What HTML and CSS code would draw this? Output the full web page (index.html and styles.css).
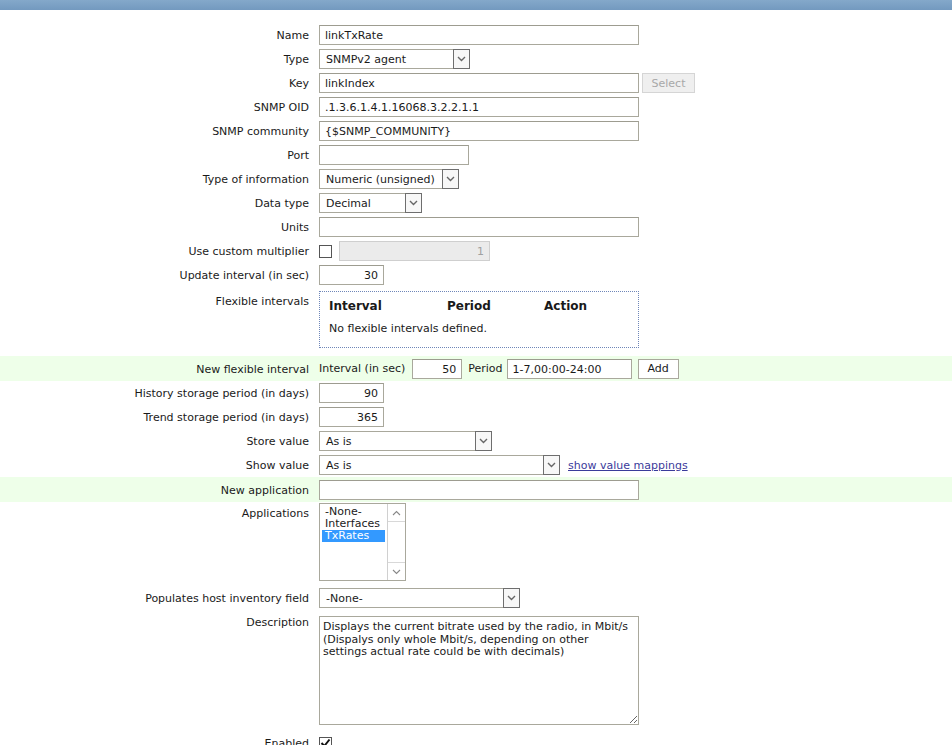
FILE: index.html
```html
<!DOCTYPE html>
<html>
<head>
<meta charset="utf-8">
<link rel="stylesheet" href="styles.css">
</head>
<body>
<div class="topbar"></div>
<form class="form">
  <div class="row"><div class="lbl">Name</div><div class="fld"><input class="inp w320" type="text" value="linkTxRate"></div></div>
  <div class="row"><div class="lbl">Type</div><div class="fld"><div class="select w151"><span class="stext">SNMPv2 agent</span><span class="arrow"><svg width="9" height="6" viewBox="0 0 9 6"><path d="M1 1l3.5 3.5L8 1" stroke="#666" stroke-width="1.4" fill="none"/></svg></span></div></div></div>
  <div class="row"><div class="lbl">Key</div><div class="fld"><input class="inp w320" type="text" value="linkIndex"><button type="button" class="btn-dis">Select</button></div></div>
  <div class="row"><div class="lbl">SNMP OID</div><div class="fld"><input class="inp w320" type="text" value=".1.3.6.1.4.1.16068.3.2.2.1.1"></div></div>
  <div class="row"><div class="lbl">SNMP community</div><div class="fld"><input class="inp w320" type="text" value="{$SNMP_COMMUNITY}"></div></div>
  <div class="row"><div class="lbl">Port</div><div class="fld"><input class="inp w150" type="text" value=""></div></div>
  <div class="row"><div class="lbl">Type of information</div><div class="fld"><div class="select w140"><span class="stext">Numeric (unsigned)</span><span class="arrow"><svg width="9" height="6" viewBox="0 0 9 6"><path d="M1 1l3.5 3.5L8 1" stroke="#666" stroke-width="1.4" fill="none"/></svg></span></div></div></div>
  <div class="row"><div class="lbl">Data type</div><div class="fld"><div class="select w103"><span class="stext">Decimal</span><span class="arrow"><svg width="9" height="6" viewBox="0 0 9 6"><path d="M1 1l3.5 3.5L8 1" stroke="#666" stroke-width="1.4" fill="none"/></svg></span></div></div></div>
  <div class="row"><div class="lbl">Units</div><div class="fld"><input class="inp w320" type="text" value=""></div></div>
  <div class="row"><div class="lbl">Use custom multiplier</div><div class="fld"><span class="chk"></span><input class="inp inp-dis w151 num" type="text" value="1" disabled></div></div>
  <div class="row"><div class="lbl">Update interval (in sec)</div><div class="fld"><input class="inp w65 num" type="text" value="30"></div></div>
  <div class="row row-top flex-row"><div class="lbl">Flexible intervals</div><div class="fld">
    <div class="flexbox">
      <div class="flexhead"><span class="h1">Interval</span><span class="h2">Period</span><span class="h3">Action</span></div>
      <div class="flexempty">No flexible intervals defined.</div>
    </div>
  </div></div>
  <div class="row green"><div class="lbl">New flexible interval</div><div class="fld"><span class="txt">Interval (in sec)</span><input class="inp w50 num" type="text" value="50"><span class="txt">Period</span><input class="inp w125" type="text" value="1-7,00:00-24:00"><button type="button" class="btn">Add</button></div></div>
  <div class="row"><div class="lbl">History storage period (in days)</div><div class="fld"><input class="inp w65 num" type="text" value="90"></div></div>
  <div class="row"><div class="lbl">Trend storage period (in days)</div><div class="fld"><input class="inp w65 num" type="text" value="365"></div></div>
  <div class="row"><div class="lbl">Store value</div><div class="fld"><div class="select w173"><span class="stext">As is</span><span class="arrow"><svg width="9" height="6" viewBox="0 0 9 6"><path d="M1 1l3.5 3.5L8 1" stroke="#666" stroke-width="1.4" fill="none"/></svg></span></div></div></div>
  <div class="row"><div class="lbl">Show value</div><div class="fld"><div class="select w241"><span class="stext">As is</span><span class="arrow"><svg width="9" height="6" viewBox="0 0 9 6"><path d="M1 1l3.5 3.5L8 1" stroke="#666" stroke-width="1.4" fill="none"/></svg></span></div><a class="link" href="#">show value mappings</a></div></div>
  <div class="row green"><div class="lbl">New application</div><div class="fld"><input class="inp w320" type="text" value=""></div></div>
  <div class="row row-top app-row"><div class="lbl">Applications</div><div class="fld">
    <div class="listbox">
      <div class="items"><div class="item">-None-</div><div class="item">Interfaces</div><div class="item sel">TxRates</div></div>
      <div class="scroll">
        <span class="sbtn"><svg width="9" height="6" viewBox="0 0 9 6"><path d="M1 5l3.5-3.5L8 5" stroke="#888" stroke-width="1.1" fill="none"/></svg></span>
        <span class="strack"></span>
        <span class="sbtn"><svg width="9" height="6" viewBox="0 0 9 6"><path d="M1 1l3.5 3.5L8 1" stroke="#888" stroke-width="1.1" fill="none"/></svg></span>
      </div>
    </div>
  </div></div>
  <div class="row"><div class="lbl">Populates host inventory field</div><div class="fld"><div class="select w201"><span class="stext">-None-</span><span class="arrow"><svg width="9" height="6" viewBox="0 0 9 6"><path d="M1 1l3.5 3.5L8 1" stroke="#666" stroke-width="1.4" fill="none"/></svg></span></div></div></div>
  <div class="row row-top desc-row"><div class="lbl">Description</div><div class="fld"><textarea class="area">Displays the current bitrate used by the radio, in Mbit/s
(Dispalys only whole Mbit/s, depending on other settings actual rate could be with decimals)</textarea></div></div>
  <div class="row"><div class="lbl">Enabled</div><div class="fld"><span class="chk checked"><svg width="11" height="10" viewBox="0 0 11 10"><path d="M1.5 5l2.8 3L9.5 1.5" stroke="#111" stroke-width="2" fill="none"/></svg></span></div></div>
</form>
</body>
</html>
```
FILE: styles.css
```css
html, body {
  margin: 0;
  padding: 0;
  background: #ffffff;
}
body {
  font-family: "DejaVu Sans", "Liberation Sans", sans-serif;
  font-size: 11px;
  color: #1a1a1a;
  overflow: hidden;
}
.topbar {
  height: 10px;
  background: linear-gradient(#84a8ca, #7399bf);
}
.form {
  padding-top: 13px;
}
.row {
  display: grid;
  grid-template-columns: 309px 1fr;
  column-gap: 10px;
  align-items: center;
  height: 24px;
}
.row-top {
  align-items: start;
  height: auto;
}
.green {
  background: #eeffe9;
  height: 25px;
}
.lbl {
  text-align: right;
  white-space: nowrap;
  padding-top: 1px;
}
.fld {
  display: flex;
  align-items: center;
}
.inp {
  box-sizing: border-box;
  height: 20px;
  border: 1px solid #a9a89c;
  border-top-color: #9d9c90;
  padding: 1px 5px 0;
  font: inherit;
  color: #1a1a1a;
  background: #fff;
  margin: 0;
  outline: none;
}
.num { text-align: right; }
.w320 { width: 320px; }
.w151 { width: 151px; }
.w150 { width: 150px; }
.w140 { width: 140px; }
.w103 { width: 103px; }
.w65 { width: 65px; }
.w50 { width: 50px; }
.w125 { width: 125px; }
.w173 { width: 173px; }
.w241 { width: 241px; }
.w201 { width: 201px; }
.select {
  box-sizing: border-box;
  height: 20px;
  border: 1px solid #a9a89c;
  display: flex;
  align-items: center;
  background: #fff;
}
.stext {
  flex: 1;
  padding-left: 6px;
  white-space: nowrap;
  overflow: hidden;
}
.arrow {
  box-sizing: border-box;
  width: 17px;
  height: 20px;
  margin: -1px -1px -1px 0;
  border: 1px solid #6e6e6e;
  background: #f7f7f7;
  display: flex;
  align-items: center;
  justify-content: center;
}
.btn-dis {
  box-sizing: border-box;
  margin-left: 3px;
  height: 20px;
  width: 53px;
  border: 1px solid #d5d5d5;
  background: #efefef;
  color: #a8a8a8;
  font: inherit;
  padding: 0;
}
.btn {
  box-sizing: border-box;
  margin-left: 6px;
  height: 20px;
  width: 41px;
  border: 1px solid #a9a89c;
  background: #fff;
  color: #1a1a1a;
  font: inherit;
  padding: 0;
}
.chk {
  box-sizing: border-box;
  width: 13px;
  height: 13px;
  border: 1px solid #555;
  background: #fff;
  display: inline-flex;
  align-items: center;
  justify-content: center;
}
.inp-dis {
  margin-left: 7px;
  background: #ebebeb;
  border-color: #cfcfcf;
  color: #a0a0a0;
}
.flex-row {
  padding: 4px 0 8px;
}
.flex-row .lbl {
  padding-top: 4px;
}
.flexbox {
  box-sizing: border-box;
  width: 320px;
  height: 57px;
  border: 1px dotted #6f86b8;
  padding: 7px 9px 6px;
}
.flexhead {
  display: flex;
  font-weight: bold;
  font-size: 12px;
}
.h1 { width: 118px; }
.h2 { width: 97px; }
.flexempty {
  margin-top: 9px;
}
.txt {
  margin-right: 7px;
}
.fld .inp + .txt {
  margin-left: 6px;
  margin-right: 4px;
}
.link {
  margin-left: 8px;
  color: #3b3b9b;
  text-decoration: underline;
}
.app-row {
  padding: 0 0 5px;
}
.app-row .lbl {
  padding-top: 5px;
}
.listbox {
  box-sizing: border-box;
  width: 87px;
  height: 78px;
  margin-top: 1px;
  border: 1px solid #a9a89c;
  display: flex;
  background: #fff;
}
.items {
  flex: 1;
  padding: 2px 2px;
  font-size: 11px;
  line-height: 12px;
}
.item {
  padding-left: 3px;
}
.item.sel {
  background: #3399ff;
  color: #fff;
}
.scroll {
  width: 17px;
  border-left: 1px solid #d0d0d0;
  display: flex;
  flex-direction: column;
}
.sbtn {
  height: 17px;
  display: flex;
  align-items: center;
  justify-content: center;
  border-top: 1px solid #d8d8d8;
}
.sbtn:first-child {
  border-top: none;
  border-bottom: 1px solid #d8d8d8;
}
.strack {
  flex: 1;
}
.desc-row {
  padding: 6px 0 6px;
}
.desc-row .lbl {
  padding-top: 0;
}
.area {
  box-sizing: border-box;
  width: 320px;
  height: 109px;
  border: 1px solid #a9a89c;
  padding: 4px 3px 3px;
  font: inherit;
  line-height: 12.5px;
  color: #1a1a1a;
  resize: both;
  margin: 0;
  outline: none;
}
```
